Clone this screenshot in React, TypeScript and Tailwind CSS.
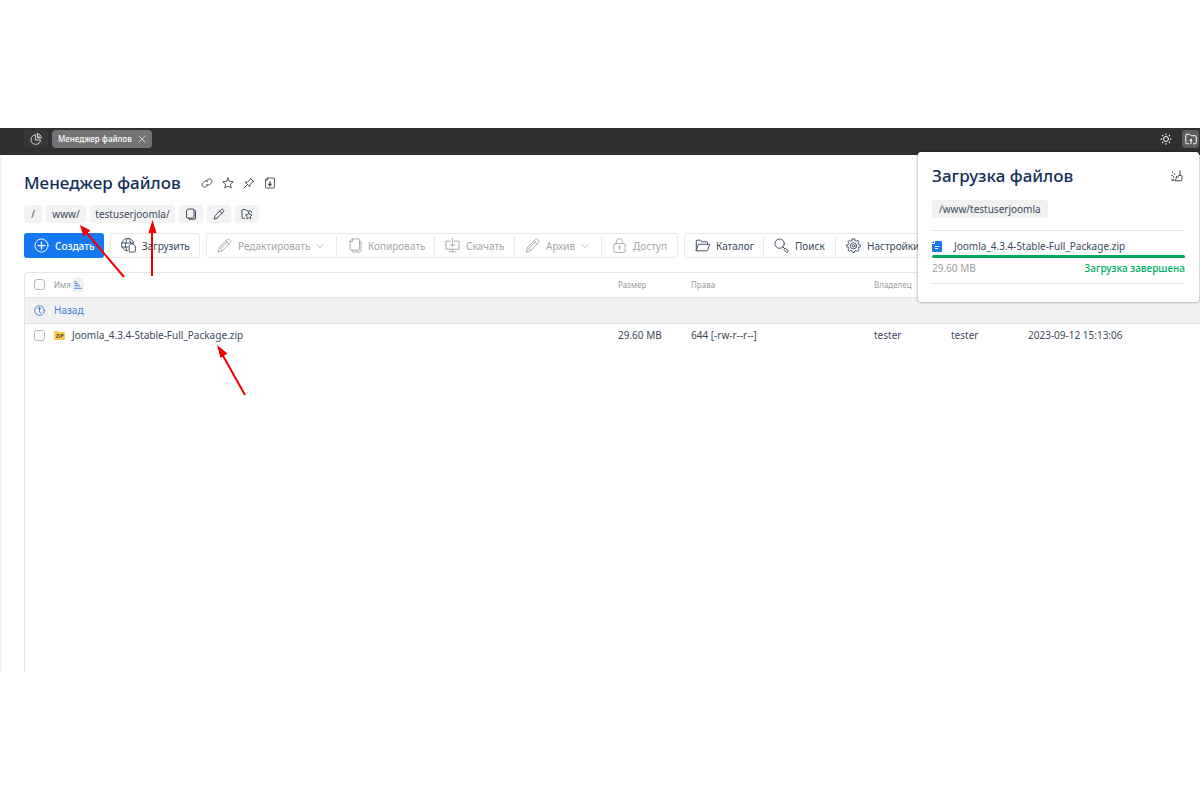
import React from 'react';

interface IconProps {
  className?: string;
  children: React.ReactNode;
}

const Icon: React.FC<IconProps> = ({ className = 'size-[15px]', children }) => (
  <svg
    viewBox="0 0 24 24"
    className={`shrink-0 ${className}`}
    fill="none"
    stroke="currentColor"
    strokeWidth="1.5"
    strokeLinecap="round"
    strokeLinejoin="round"
    aria-hidden="true"
  >
    {children}
  </svg>
);

const pencil = (
  <>
    <path d="M2 22l2-7L16.500 2.500a2.500 2.500 0 0 1 3.500 0l1.500 1.500a2.500 2.500 0 0 1 0 3.500L9 20z" />
    <path d="M4 15l5 5M14 5l5 5M7 16L17 6" />
  </>
);

const copy = (
  <>
    <path d="M9 1.500h9a2 2 0 0 1 2 2v14a2 2 0 0 1-2 2H7a2 2 0 0 1-2-2v-12z" />
    <path d="M9 1.500v4H5M20 5h.5a2 2 0 0 1 2 2v13a2.500 2.500 0 0 1-2.500 2.500H10a2 2 0 0 1-2-2v-1" />
  </>
);

const Chevron = () => (
  <Icon className="size-2">
    <path d="M3 8l9 9 9-9" strokeWidth="2.500" />
  </Icon>
);

interface ToolButtonProps {
  icon: React.ReactNode;
  label: string;
  width: string;
  menu?: boolean;
  disabled?: boolean;
}

const ToolButton: React.FC<ToolButtonProps> = ({ icon, label, width, menu, disabled }) => (
  <button
    type="button"
    disabled={disabled}
    className={`flex h-5 shrink-0 items-center gap-1.5 pl-2.5 whitespace-nowrap ${width}`}
  >
    <Icon>{icon}</Icon>
    {label}
    {menu && <Chevron />}
  </button>
);

const headerIcons = [
  {
    name: 'Ссылка',
    icon: (
      <>
        <path d="M10.500 8l3.500-3.200a5 5 0 0 1 7 7L17.500 15a5 5 0 0 1-6.500.3" strokeWidth="1.800" />
        <path d="M13.500 16L10 19.200a5 5 0 0 1-7-7L6.500 9a5 5 0 0 1 6.500-.3" strokeWidth="1.800" />
      </>
    ),
  },
  {
    name: 'В избранное',
    icon: (
      <path d="M12 2l2.800 6.800 7.700.7-5.800 5 1.800 7.500-6.500-4-6.500 4 1.800-7.500-5.800-5 7.700-.7z" strokeWidth="1.800" />
    ),
  },
  {
    name: 'Закрепить',
    icon: <path d="M2 22l7-7M4.500 10.500l9 9 1-5.500 6-5L15.500 3.500 10 9.500zM14.500 2.500l7 7" strokeWidth="1.800" />,
  },
  {
    name: 'Сохранить',
    icon: (
      <>
        <path d="M7 2h12a2 2 0 0 1 2 2v16a2 2 0 0 1-2 2H5a2 2 0 0 1-2-2V6zM7 2v4H3" strokeWidth="1.800" />
        <path d="M12 9v8" strokeWidth="2" />
        <path d="M9 14h6l-3 4z" fill="currentColor" />
      </>
    ),
  },
];

const pathActions = [
  {
    name: 'Копировать путь',
    icon: (
      <>
        <path d="M7 2h9a2 2 0 0 1 2 2v14a2 2 0 0 1-2 2H5a2 2 0 0 1-2-2V6z" strokeWidth="2" />
        <path d="M18 4.500h1a2 2 0 0 1 2 2V20a2.500 2.500 0 0 1-2.500 2.500H8L6.500 20" strokeWidth="2" />
      </>
    ),
  },
  {
    name: 'Изменить путь',
    icon: (
      <>
        <path d="M2.500 21.500l1.500-6L16.500 3a2.500 2.500 0 0 1 3.500 0l1 1a2.500 2.500 0 0 1 0 3.500L8.500 20z" strokeWidth="2" />
        <path d="M13.500 6l4.500 4.500" strokeWidth="2" />
      </>
    ),
  },
  {
    name: 'Избранная папка',
    icon: (
      <>
        <path d="M7 20.500H4a2 2 0 0 1-2-2V5a2 2 0 0 1 2-2h5l3 3h7a2 2 0 0 1 2 2v1" strokeWidth="2" />
        <path d="M15.500 9l2 4.200 4.500.6-3.200 3.200.8 4.700-4.100-2.200-4.100 2.200.8-4.700L9 13.800l4.500-.6z" strokeWidth="1.800" />
      </>
    ),
  },
];

const TopBar = () => (
  <header className="flex h-[27px] items-center bg-[#303030] pr-px pb-[5px] pl-6 text-white">
    <button
      type="button"
      aria-label="Панель"
      className="flex h-[18px] w-6 items-center justify-center rounded-sm bg-[#383838]"
    >
      <Icon className="size-3">
        <path d="M11 3.500A9.500 9.500 0 1 0 21 14H11z" />
        <path d="M15 1.500V10h7.500A8.500 8.500 0 0 0 15 1.500zM18 6v4" />
      </Icon>
    </button>
    <div className="ml-1 flex h-[18px] w-[100px] items-center justify-between rounded-sm bg-[#737373] px-[6px] text-[8px] font-medium">
      <span className="whitespace-nowrap">Менеджер файлов</span>
      <button type="button" aria-label="Закрыть вкладку">
        <Icon className="size-2">
          <path d="M3 3l18 18M21 3L3 21" strokeWidth="2" />
        </Icon>
      </button>
    </div>
    <div className="ml-auto flex items-center gap-2.5">
      <button type="button" aria-label="Тема">
        <Icon className="size-3">
          <circle cx="12" cy="12" r="5" strokeWidth="2" />
          <path
            d="M12 2v1M12 21v1M2 12h1M21 12h1M5 5l.5.5M18.500 18.500l.5.5M5 19l.5-.5M18.500 5.500l.5-.5"
            strokeWidth="2.500"
          />
        </Icon>
      </button>
      <button
        type="button"
        aria-label="Загрузки"
        className="flex h-[18px] w-[17px] items-center justify-center rounded-sm bg-[#5c5c5c]"
      >
        <Icon className="size-3">
          <path
            d="M7 21.500H3.500a2 2 0 0 1-2-2V4.500a2 2 0 0 1 2-2H9L12 5.500h8.500a2 2 0 0 1 2 2v12a2 2 0 0 1-2 2H17"
            strokeWidth="2"
          />
          <path d="M12 21.500V14" strokeWidth="2" />
          <path d="M8.500 15.500h7L12 11z" fill="currentColor" stroke="none" />
        </Icon>
      </button>
    </div>
  </header>
);

const Toolbar = () => (
  <div className="flex text-[#38495e]">
    <button
      type="button"
      className="flex h-[25px] w-20 shrink-0 items-center gap-1.5 rounded-[3px] bg-[#1677f2] pl-2.5 font-medium text-white"
    >
      <Icon>
        <circle cx="12" cy="12" r="10.500" />
        <path d="M12 6.500v11M6.500 12h11" strokeWidth="2" />
      </Icon>
      Создать
    </button>
    <div className="ml-1.5 flex h-[25px] items-center rounded-[3px] border border-[#e8e8e8]">
      <ToolButton
        width="w-[88px]"
        label="Загрузить"
        icon={
          <>
            <path d="M10 20.500A10 10 0 1 1 20.500 8M1.500 8h18M1.500 14.500H11M10.500 1C6 6 6 15 10 20.500M12 1c2 2 3 4 3.300 7" />
            <path d="M16 9.500h3l4 3.500v8a1.500 1.500 0 0 1-1.500 1.500h-7a1.500 1.500 0 0 1-1.500-1.500V13z" />
          </>
        }
      />
    </div>
    <div className="ml-1.5 flex h-[25px] items-center divide-x divide-[#e8e8e8] rounded-[3px] border border-[#e8e8e8] text-[#a3a7ab]">
      <ToolButton width="w-[130px]" label="Редактировать" icon={pencil} menu disabled />
      <ToolButton width="w-[98px]" label="Копировать" icon={copy} disabled />
      <ToolButton
        width="w-20"
        label="Скачать"
        disabled
        icon={
          <>
            <path d="M9 5H1.500v13h21V5H15M12 1v12M8.500 10l3.500 3.500 3.500-3.500M12 18v4M7 22h10" />
          </>
        }
      />
      <ToolButton width="w-[87px]" label="Архив" icon={pencil} menu disabled />
      <ToolButton
        width="w-[75px]"
        label="Доступ"
        disabled
        icon={
          <>
            <rect x="3" y="9" width="18" height="14" rx="2" />
            <path d="M7 9V6a5 5 0 0 1 10 0v3M12 15v3" />
            <circle cx="12" cy="14.500" r="1" />
          </>
        }
      />
    </div>
    <div className="ml-1.5 flex h-[25px] items-center divide-x divide-[#e8e8e8] rounded-[3px] border border-[#e8e8e8]">
      <ToolButton
        width="w-[79px]"
        label="Каталог"
        icon={
          <path d="M2 19V5a1.500 1.500 0 0 1 1.500-1.500H9l2 2.500h7.500A1.500 1.500 0 0 1 20 7.500V10M2 19.500L5.500 10h18L20.500 19a2 2 0 0 1-2 1.500H3a1 1 0 0 1-1-1z" />
        }
      />
      <ToolButton
        width="w-[72px]"
        label="Поиск"
        icon={
          <>
            <circle cx="9" cy="9" r="7.500" />
            <path d="M14.500 14.500l2 2M16 18l2-2 5 5-2 2z" />
          </>
        }
      />
      <ToolButton
        width="w-[92px]"
        label="Настройки"
        icon={
          <>
            <path d="M10 1.500h4l.6 2.800 2 .9L19 3.500 21 6l-1.600 2.400.8 2 2.800.6v3l-2.800.6-.8 2L21 19l-2.500 2.500-2.300-1.600-2 .8-.7 2.300h-3l-.7-2.300-2-.8-2.300 1.600L3 19l1.600-2.400-.8-2L1 14v-3l2.800-.6.8-2L3 6l2.500-2.500 2.300 1.700 1.600-.8z" />
            <circle cx="12" cy="12.500" r="5" />
            <circle cx="12" cy="12.500" r="2" />
          </>
        }
      />
    </div>
  </div>
);

const Checkbox = ({ label }: { label: string }) => (
  <input
    type="checkbox"
    aria-label={label}
    className="size-[11px] shrink-0 appearance-none rounded-[3px] border border-[#b8b8b8] bg-white"
  />
);

const FileTable = () => (
  <div className="mt-3.5 min-h-[400px] rounded-tl-sm border-t border-l border-[#e5e5e5]">
    <table className="w-full table-fixed text-left">
      <colgroup>
        <col />
        <col className="w-[73px]" />
        <col className="w-[183px]" />
        <col className="w-[77px]" />
        <col className="w-[77px]" />
        <col className="w-[172px]" />
      </colgroup>
      <thead>
        <tr className="h-6 text-[8px] text-[#9b9b9b]">
          <th className="pl-[9px] font-normal">
            <div className="flex items-center">
              <Checkbox label="Выбрать все" />
              <span className="ml-[9px]">Имя</span>
              <button
                type="button"
                aria-label="Сортировка"
                className="ml-px flex h-4 w-3 items-center justify-center rounded-full bg-[#f1f1f1] text-[#4a86d8]"
              >
                <Icon className="size-2.5">
                  <path d="M4 4h4M4 9h8M4 14h12M4 20h17" strokeWidth="2.500" />
                </Icon>
              </button>
            </div>
          </th>
          <th className="font-normal">Размер</th>
          <th className="font-normal">Права</th>
          <th className="font-normal">Владелец</th>
          <th className="font-normal">Группа</th>
          <th className="font-normal">Дата</th>
        </tr>
      </thead>
      <tbody>
        <tr className="h-[26px] border-y border-[#e3e3e3] bg-[#f1f1f1]">
          <td colSpan={6} className="pl-[9px]">
            <a href="#" className="flex items-center gap-[9px] text-[#3f7bd0]">
              <Icon className="size-[11px]">
                <circle cx="12" cy="12" r="10.500" strokeWidth="2" />
                <path d="M8.500 8.500L12 5l3 3.500M12 5v8c0 3 1 4 3 4" strokeWidth="2" />
              </Icon>
              Назад
            </a>
          </td>
        </tr>
        <tr className="h-6 text-[#3b4a5c]">
          <td className="pl-[9px]">
            <div className="flex items-center">
              <Checkbox label="Joomla_4.3.4-Stable-Full_Package.zip" />
              <svg viewBox="0 0 22 18" className="ml-[9px] h-[9px] w-[11px] shrink-0" aria-hidden="true">
                <path d="M0 2a2 2 0 0 1 2-2h6l3 2h9a2 2 0 0 1 2 2v12a2 2 0 0 1-2 2H2a2 2 0 0 1-2-2z" fill="#fcc951" />
                <path d="M5 7h4l-4 6h4M12 7l-1 6M14 13l1-6h3v3h-3" fill="none" stroke="#4b4030" strokeWidth="1.700" />
              </svg>
              <span className="ml-[7px]">Joomla_4.3.4-Stable-Full_Package.zip</span>
            </div>
          </td>
          <td>29.60 MB</td>
          <td>644 [-rw-r--r--]</td>
          <td>tester</td>
          <td>tester</td>
          <td>2023-09-12 15:13:06</td>
        </tr>
      </tbody>
    </table>
  </div>
);

const UploadPanel = () => (
  <aside className="absolute top-6 right-px h-[150px] w-[281px] rounded-[3px] bg-white px-3.5 pt-3 shadow-[0_0_3px_rgba(0,0,0,0.45)]">
    <div className="flex h-6 items-center justify-between pr-0.5">
      <h2 className="text-[17px] font-medium text-[#132f57]">Загрузка файлов</h2>
      <button type="button" aria-label="Очистить" className="text-[#404040]">
        <Icon className="size-3">
          <path d="M18 2v9M11 12.500c0 4-1 6-3 9h11a3 3 0 0 0 3-3V13a2 2 0 0 0-2-2h-4c-2 0-2 2-2 4" strokeWidth="2" />
          <path d="M3 4h.1M7 8h.1M2 11h.1M5 14h.1M2 20h3" strokeWidth="3" />
        </Icon>
      </button>
    </div>
    <div className="mt-3 flex">
      <span className="flex h-[18px] items-center rounded-sm bg-[#f1f1f2] px-[7px] text-[#3b4a5c]">
        /www/testuserjoomla
      </span>
    </div>
    <div className="mt-3 border-y border-[#e5e5e5] pt-[7px] pb-[9px]">
      <div className="flex h-4 items-center gap-3 text-[#3b4a5c]">
        <svg viewBox="0 0 20 22" className="h-[11px] w-2.5 shrink-0" aria-hidden="true">
          <path d="M6 0h12a2 2 0 0 1 2 2v18a2 2 0 0 1-2 2H2a2 2 0 0 1-2-2V6h6z" fill="#1677f2" />
          <path d="M0 4l4-4v4z" fill="#1677f2" />
          <path d="M6 11h9M6 15h6" stroke="#fff" strokeWidth="2" />
        </svg>
        Joomla_4.3.4-Stable-Full_Package.zip
      </div>
      <div className="mt-px h-[3px] rounded-xs bg-[#00a65a]" />
      <div className="mt-1 flex h-3 items-center justify-between">
        <span className="text-[#a0a0a0]">29.60 MB</span>
        <span className="font-medium text-[#00ad68]">Загрузка завершена</span>
      </div>
    </div>
  </aside>
);

// Pointers over the path and the uploaded file
const Arrows = () => (
  <svg
    className="pointer-events-none absolute top-0 left-0 h-[280px] w-[260px]"
    viewBox="0 0 260 280"
    stroke="#f20000"
    fill="#f20000"
    aria-hidden="true"
  >
    <path d="M124 149L85 103M152 148V100M245 267L222 226" strokeWidth="2" />
    <path d="M80 97l10.500 5.500-7 6zM152.500 92l4 13h-8zM217 217l10.500 8.500-7 4.500z" stroke="none" />
  </svg>
);

const App: React.FC = () => {
  return (
    <div className="min-h-screen bg-white py-32 font-['Noto_Sans',sans-serif] text-[10px] leading-3">
      <div className="relative overflow-hidden">
        <TopBar />
        <main className="border-l-2 border-[#f3f3f3] pt-4 pl-[22px]">
          <div className="flex h-6 items-center">
            <h1 className="text-[17px] font-medium text-[#132f57]">Менеджер файлов</h1>
            <div className="ml-5 flex gap-[9px] text-[#454545]">
              {headerIcons.map((item) => (
                <button key={item.name} type="button" aria-label={item.name}>
                  <Icon className="size-3">{item.icon}</Icon>
                </button>
              ))}
            </div>
          </div>
          <nav className="mt-2.5 mb-2.5 flex h-[18px] gap-1 text-[#3b4a5c]">
            <a href="#" className="flex w-[18px] items-center justify-center rounded-sm bg-[#f3f3f4]">/</a>
            <a href="#" className="flex w-10 items-center justify-center rounded-sm bg-[#f3f3f4]">www/</a>
            <a href="#" className="flex w-[85px] items-center justify-center rounded-sm bg-[#f3f3f4]">testuserjoomla/</a>
            {pathActions.map((item) => (
              <button
                key={item.name}
                type="button"
                aria-label={item.name}
                className="flex w-6 items-center justify-center rounded-sm bg-[#f3f3f4]"
              >
                <Icon className="size-3">{item.icon}</Icon>
              </button>
            ))}
          </nav>
          <Toolbar />
          <FileTable />
        </main>
        <UploadPanel />
        <Arrows />
      </div>
    </div>
  );
};

export default App;
